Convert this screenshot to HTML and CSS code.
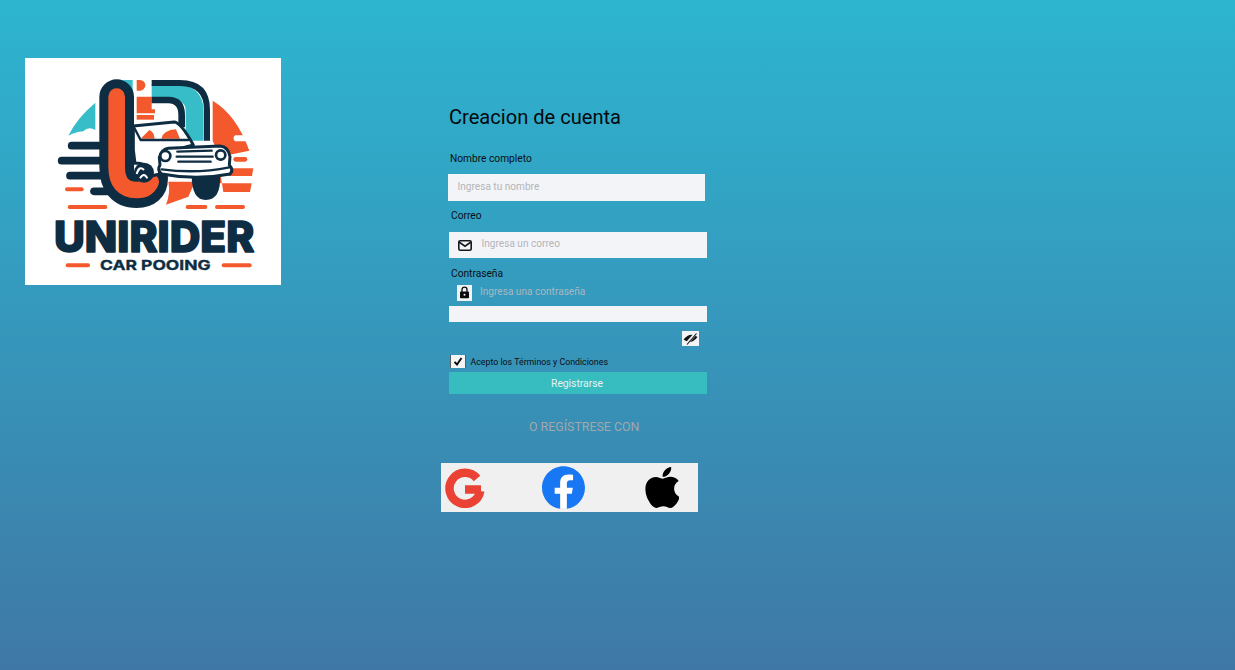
FILE: index.html
```html
<!DOCTYPE html>
<html lang="es">

<head>
  <meta charset="UTF-8">
  <meta name="viewport" content="width=device-width, initial-scale=1.0">
  <title>Creacion de cuenta</title>
  <link rel="stylesheet" href="styles.css">
</head>

<body>
  <div class="page">
    <div class="logo">
      <svg viewBox="15 24 768 681" width="256" height="227">
        <!-- fondo del logo -->
        <path class="orange" d="M578 152Q650 195 688 302L600 320V400H695L690 426H610L590 300L578 272Z" />
        <path class="orange" d="M625 355H700L696 378H625Z" />
        <rect class="orange" x="640" y="321" width="42" height="14" rx="7" />
        <path class="white" d="M645 256H700V274H645Q636 265 645 256Z" />
        <path class="orange" d="M445 395H525L505 440L438 464Q452 430 445 395Z" />
        <path class="teal" d="M145 257Q170 205 226 158V240Q205 228 190 244Q165 246 145 257Z" />
        <path class="teal" d="M298 90H338V128Q330 100 298 90Z" />
        <path class="orange" d="M350 90H360A16 16 0 0 1 360 122H350Z" />
        <path class="orange" d="M350 140H395V178H405V190H350Z" />
        <rect class="orange" x="350" y="195" width="52" height="14" />

        <!-- arco -->
        <path class="line-teal" d="M395 130H470Q524 130 524 184V272" />
        <path class="line-dark arc-out" d="M395 99H480Q561 99 561 180V272" />
        <path class="line-dark arc-in" d="M395 150H445Q485 150 485 195V232" />

        <!-- lineas de velocidad -->
        <g class="speed">
          <path d="M155 287H255" />
          <path d="M125 332H255" />
          <path d="M150 377H255" />
          <path d="M222 424H285" />
        </g>
        <g class="dash">
          <path d="M141 418H185" />
          <path d="M149 471H256" />
          <path d="M503 471H556" />
          <path d="M591 471H669" />
          <path d="M143 646H204" />
          <path d="M611 646H689" />
        </g>

        <!-- letra U -->
        <path class="u-dark" d="M290 140V350Q290 422 350 422Q392 422 392 385" />
        <path class="u-orange" d="M290 140V350Q290 420 350 420Q382 420 392 395" />

        <!-- carro -->
        <path class="car" d="M340 228L462 216Q482 216 520 285L425 310L418 372L395 378Q385 335 345 340L340 300Z" />
        <path class="orange" d="M362 266L388 240Q402 245 404 266Z" />
        <path class="orange" d="M424 266Q430 240 468 238L480 266Z" />
        <path class="thin" d="M340 228L362 270H505" />
        <path class="dark" d="M515 375H600Q604 450 557 450Q515 450 515 375Z" />
        <circle class="dark" cx="372" cy="368" r="30" />
        <path class="swirl" d="M350 372Q358 345 372 360M360 385Q372 365 382 385" />
        <path class="car" d="M418 322Q425 298 445 295L600 288Q625 290 630 320L628 345Q642 360 630 372Q530 392 425 372Q410 360 420 345Z" />
        <path class="thin" d="M472 305L575 302M470 320H578M475 335H572M425 358Q530 372 628 352" />
        <circle class="lamp" cx="436" cy="318" r="15" />
        <circle class="lamp" cx="602" cy="315" r="14" />

        <text class="logo-name" x="102" y="607" textLength="601" lengthAdjust="spacingAndGlyphs">UNIRIDER</text>
        <text class="logo-sub" x="240" y="661" textLength="332" lengthAdjust="spacingAndGlyphs">CAR POOING</text>
      </svg>
    </div>

    <form class="form">
      <h1 class="title">Creacion de cuenta</h1>

      <label class="label label-name">Nombre completo</label>
      <div class="field field-name">
        <input class="input" type="text" placeholder="Ingresa tu nombre">
      </div>

      <label class="label label-mail">Correo</label>
      <div class="field field-mail">
        <svg class="mail-icon" viewBox="0 0 14 11" width="14" height="11">
          <rect x="0.8" y="0.8" width="12.4" height="9.4" rx="1.4" />
          <path d="M1 2L7 6.2L13 2" />
        </svg>
        <input class="input" type="email" placeholder="Ingresa un correo">
      </div>

      <label class="label label-pass">Contraseña</label>
      <div class="pass-row">
        <span class="icon-box lock-box">
          <svg viewBox="0 0 15 15" width="15" height="15">
            <path class="lock-arc" d="M5 7V4.6A2.5 2.5 0 0 1 10 4.6V7" />
            <rect x="3" y="6.6" width="9" height="6.6" rx="0.8" />
            <circle class="lock-dot" cx="7.5" cy="9.8" r="1" />
          </svg>
        </span>
        <span class="pass-hint">Ingresa una contraseña</span>
      </div>
      <div class="pass-bar"></div>
      <span class="icon-box eye-box">
        <svg viewBox="0 0 17 15" width="17" height="15">
          <path class="eye" d="M1.5 8.5Q8 0.5 15.5 6Q9 14.5 1.5 8.5Z" />
          <path class="eye-gap" d="M3.5 14L14.5 1.5" />
          <path class="eye-slash" d="M5 13.5L14.5 2.5" />
        </svg>
      </span>

      <label class="terms">
        <span class="check">
          <svg viewBox="0 0 16 13" width="16" height="13">
            <path d="M4.5 6.8L7 9.5L11.5 3" />
          </svg>
        </span>
        Acepto los Términos y Condiciones
      </label>

      <button class="submit" type="button">Registrarse</button>

      <p class="or">O REGÍSTRESE CON</p>

      <div class="social">
        <svg class="google" viewBox="0 0 40 40" width="40" height="40">
          <path d="M32 10.5A15.5 15.5 0 1 0 35.3 23" />
          <path d="M20 21.5H36" />
        </svg>
        <svg class="facebook" viewBox="0 0 24 24" width="43" height="43">
          <circle cx="12" cy="12" r="11.6" fill="#fff" />
          <path fill="#1877f2" d="M24 12.073c0-6.627-5.373-12-12-12s-12 5.373-12 12c0 5.99 4.388 10.954 10.125 11.854v-8.385H7.078v-3.47h3.047V9.43c0-3.007 1.792-4.669 4.533-4.669 1.312 0 2.686.235 2.686.235v2.953H15.83c-1.491 0-1.956.925-1.956 1.874v2.25h3.328l-.532 3.47h-2.796v8.385C19.612 23.027 24 18.062 24 12.073z" />
        </svg>
        <svg class="apple" viewBox="0 32 372 448" width="34" height="41">
          <path d="M318.7 268.7c-.2-36.7 16.4-64.4 50-84.8-18.8-26.9-47.2-41.7-84.7-44.6-35.5-2.8-74.3 20.7-88.5 20.7-15 0-49.4-19.7-76.4-19.7C63.3 141.2 4 184.8 4 273.5q0 39.3 14.4 81.2c12.8 36.7 59 126.7 107.2 125.2 25.2-.6 43-17.9 75.8-17.9 31.8 0 48.3 17.9 76.4 17.9 48.6-.7 90.4-82.5 102.6-119.3-65.2-30.7-61.7-90-61.7-91.9zm-56.6-164.2c27.3-32.4 24.8-61.9 24-72.5-24.1 1.4-52 16.4-67.9 34.9-17.5 19.8-27.8 44.3-25.6 71.9 26.1 2 49.9-11.4 69.5-34.3z" />
        </svg>
      </div>
    </form>
  </div>
</body>

</html>
```

FILE: styles.css
```css
* {
  box-sizing: border-box;
}

html,
body {
  height: 100%;
}

body {
  margin: 0;
  background: linear-gradient(180deg, #2db5d0 0%, #3f78a6 100%);
  font-family: Roboto, "Liberation Sans", sans-serif;
  color: #0a0f14;
}

.page {
  display: flex;
  align-items: flex-start;
  padding: 58px 0 0 25px;
}

/* logo */
.logo {
  flex: none;
  width: 256px;
  height: 227px;
  background: #fff;
}

.logo svg {
  display: block;
}

.orange {
  fill: #f4592e;
}

.teal {
  fill: #36bdc8;
}

.white {
  fill: #fff;
}

.dark {
  fill: #0f2d42;
}

.line-teal,
.line-dark,
.speed path,
.dash path,
.u-dark,
.u-orange,
.thin,
.swirl,
.lamp {
  fill: none;
}

.line-teal {
  stroke: #36bdc8;
  stroke-width: 54;
}

.line-dark {
  stroke: #0f2d42;
}

.arc-out {
  stroke-width: 18;
}

.arc-in {
  stroke-width: 20;
}

.speed path {
  stroke: #0f2d42;
  stroke-width: 23;
  stroke-linecap: round;
}

.dash path {
  stroke: #f4592e;
  stroke-width: 12;
  stroke-linecap: round;
}

.u-dark {
  stroke: #0f2d42;
  stroke-width: 104;
  stroke-linecap: round;
}

.u-orange {
  stroke: #f4592e;
  stroke-width: 50;
  stroke-linecap: round;
}

.car {
  fill: #fff;
  stroke: #0f2d42;
  stroke-width: 9;
  stroke-linejoin: round;
}

.thin {
  stroke: #0f2d42;
  stroke-width: 7;
  stroke-linecap: round;
}

.swirl {
  stroke: #fff;
  stroke-width: 6;
}

.lamp {
  fill: #fff;
  stroke: #0f2d42;
  stroke-width: 8;
}

.logo-name,
.logo-sub {
  font-family: Inter, "Liberation Sans", sans-serif;
  fill: #0f2d42;
  stroke: #0f2d42;
  stroke-linejoin: round;
}

.logo-name {
  font-size: 128px;
  font-weight: 800;
  stroke-width: 5;
}

.logo-sub {
  font-size: 41px;
  font-weight: 700;
  stroke-width: 1;
}

/* formulario */
.form {
  display: flex;
  flex-direction: column;
  align-items: flex-start;
  flex: none;
  width: 270px;
  margin: 47px 0 0 160px;
}

.title {
  margin: 0 0 0 8px;
  font-size: 20.1px;
  font-weight: 400;
  line-height: 24px;
  color: #05090d;
}

.label {
  font-size: 10.2px;
  line-height: 14px;
}

.label-name {
  margin: 23px 0 0 9px;
}

.label-mail {
  margin: 8px 0 0 10px;
}

.label-pass {
  margin: 9px 0 0 10px;
}

.field {
  display: flex;
  align-items: center;
  background: #f3f4f8;
}

.field-name {
  width: 257px;
  height: 27px;
  margin: 8px 0 0 7px;
  padding: 0 0 3px 9.5px;
}

.field-mail {
  width: 258px;
  height: 26px;
  margin: 9px 0 0 8px;
  padding: 0 0 0 9px;
  gap: 9.5px;
}

.input {
  flex: 1;
  min-width: 0;
  border: 0;
  padding: 0;
  background: transparent;
  font: 400 10.1px Roboto, "Liberation Sans", sans-serif;
  outline: none;
}

.field-mail .input {
  margin-top: -4px;
}

.input::placeholder {
  color: #b3b4b9;
  opacity: 1;
}

.mail-icon {
  flex: none;
  fill: none;
  stroke: #14181f;
  stroke-width: 1.6;
}

.pass-row {
  display: flex;
  align-items: flex-start;
  gap: 8px;
  height: 16px;
  margin: 4px 0 0 16px;
}

.pass-hint {
  margin-top: 1px;
  font-size: 10.1px;
  line-height: 12px;
  color: #a9b8c2;
}

.icon-box {
  display: block;
  flex: none;
  background: #f2f3f6;
}

.icon-box svg {
  display: block;
}

.lock-box {
  width: 15px;
  height: 16px;
}

.lock-box rect {
  fill: #0c0c0c;
}

.lock-arc {
  fill: none;
  stroke: #0c0c0c;
  stroke-width: 1.3;
}

.lock-dot {
  fill: #f2f3f6;
}

.pass-bar {
  width: 258px;
  height: 16px;
  margin: 5px 0 0 8px;
  background: #f3f4f8;
}

.eye-box {
  width: 17px;
  height: 15px;
  margin: 9px 0 0 241px;
}

.eye {
  fill: #111;
}

.eye-gap {
  stroke: #f2f3f6;
  stroke-width: 3;
}

.eye-slash {
  stroke: #111;
  stroke-width: 1.1;
}

.terms {
  display: flex;
  align-items: center;
  gap: 4.5px;
  height: 13px;
  margin: 9px 0 0 9px;
  font-size: 8.8px;
  white-space: nowrap;
}

.check {
  display: block;
  flex: none;
  width: 16px;
  height: 13px;
  border-left: 1px solid #5a5f66;
  border-right: 1px solid #5a5f66;
  background: #f4f4f6;
}

.check svg {
  display: block;
  margin-left: -1px;
  fill: none;
  stroke: #0a0a0a;
  stroke-width: 1.9;
}

.submit {
  width: 258px;
  height: 22px;
  margin: 4px 0 0 8px;
  border: 0;
  padding: 1px 2px 0 0;
  background: #37bdc0;
  color: #e6f2f2;
  font: 400 10.3px Roboto, "Liberation Sans", sans-serif;
}

.or {
  margin: 26px 0 0 88px;
  font-size: 12.4px;
  line-height: 14px;
  color: #a2a8aa;
}

.social {
  display: flex;
  align-items: center;
  width: 257px;
  height: 49px;
  margin-top: 29px;
  padding-left: 4px;
  background: #f0f0f0;
}

.google {
  flex: none;
  fill: none;
  stroke: #ea4335;
  stroke-width: 8.5;
}

.facebook {
  flex: none;
  margin-left: 57px;
}

.apple {
  flex: none;
  margin-left: 60px;
  fill: #000;
}
```
